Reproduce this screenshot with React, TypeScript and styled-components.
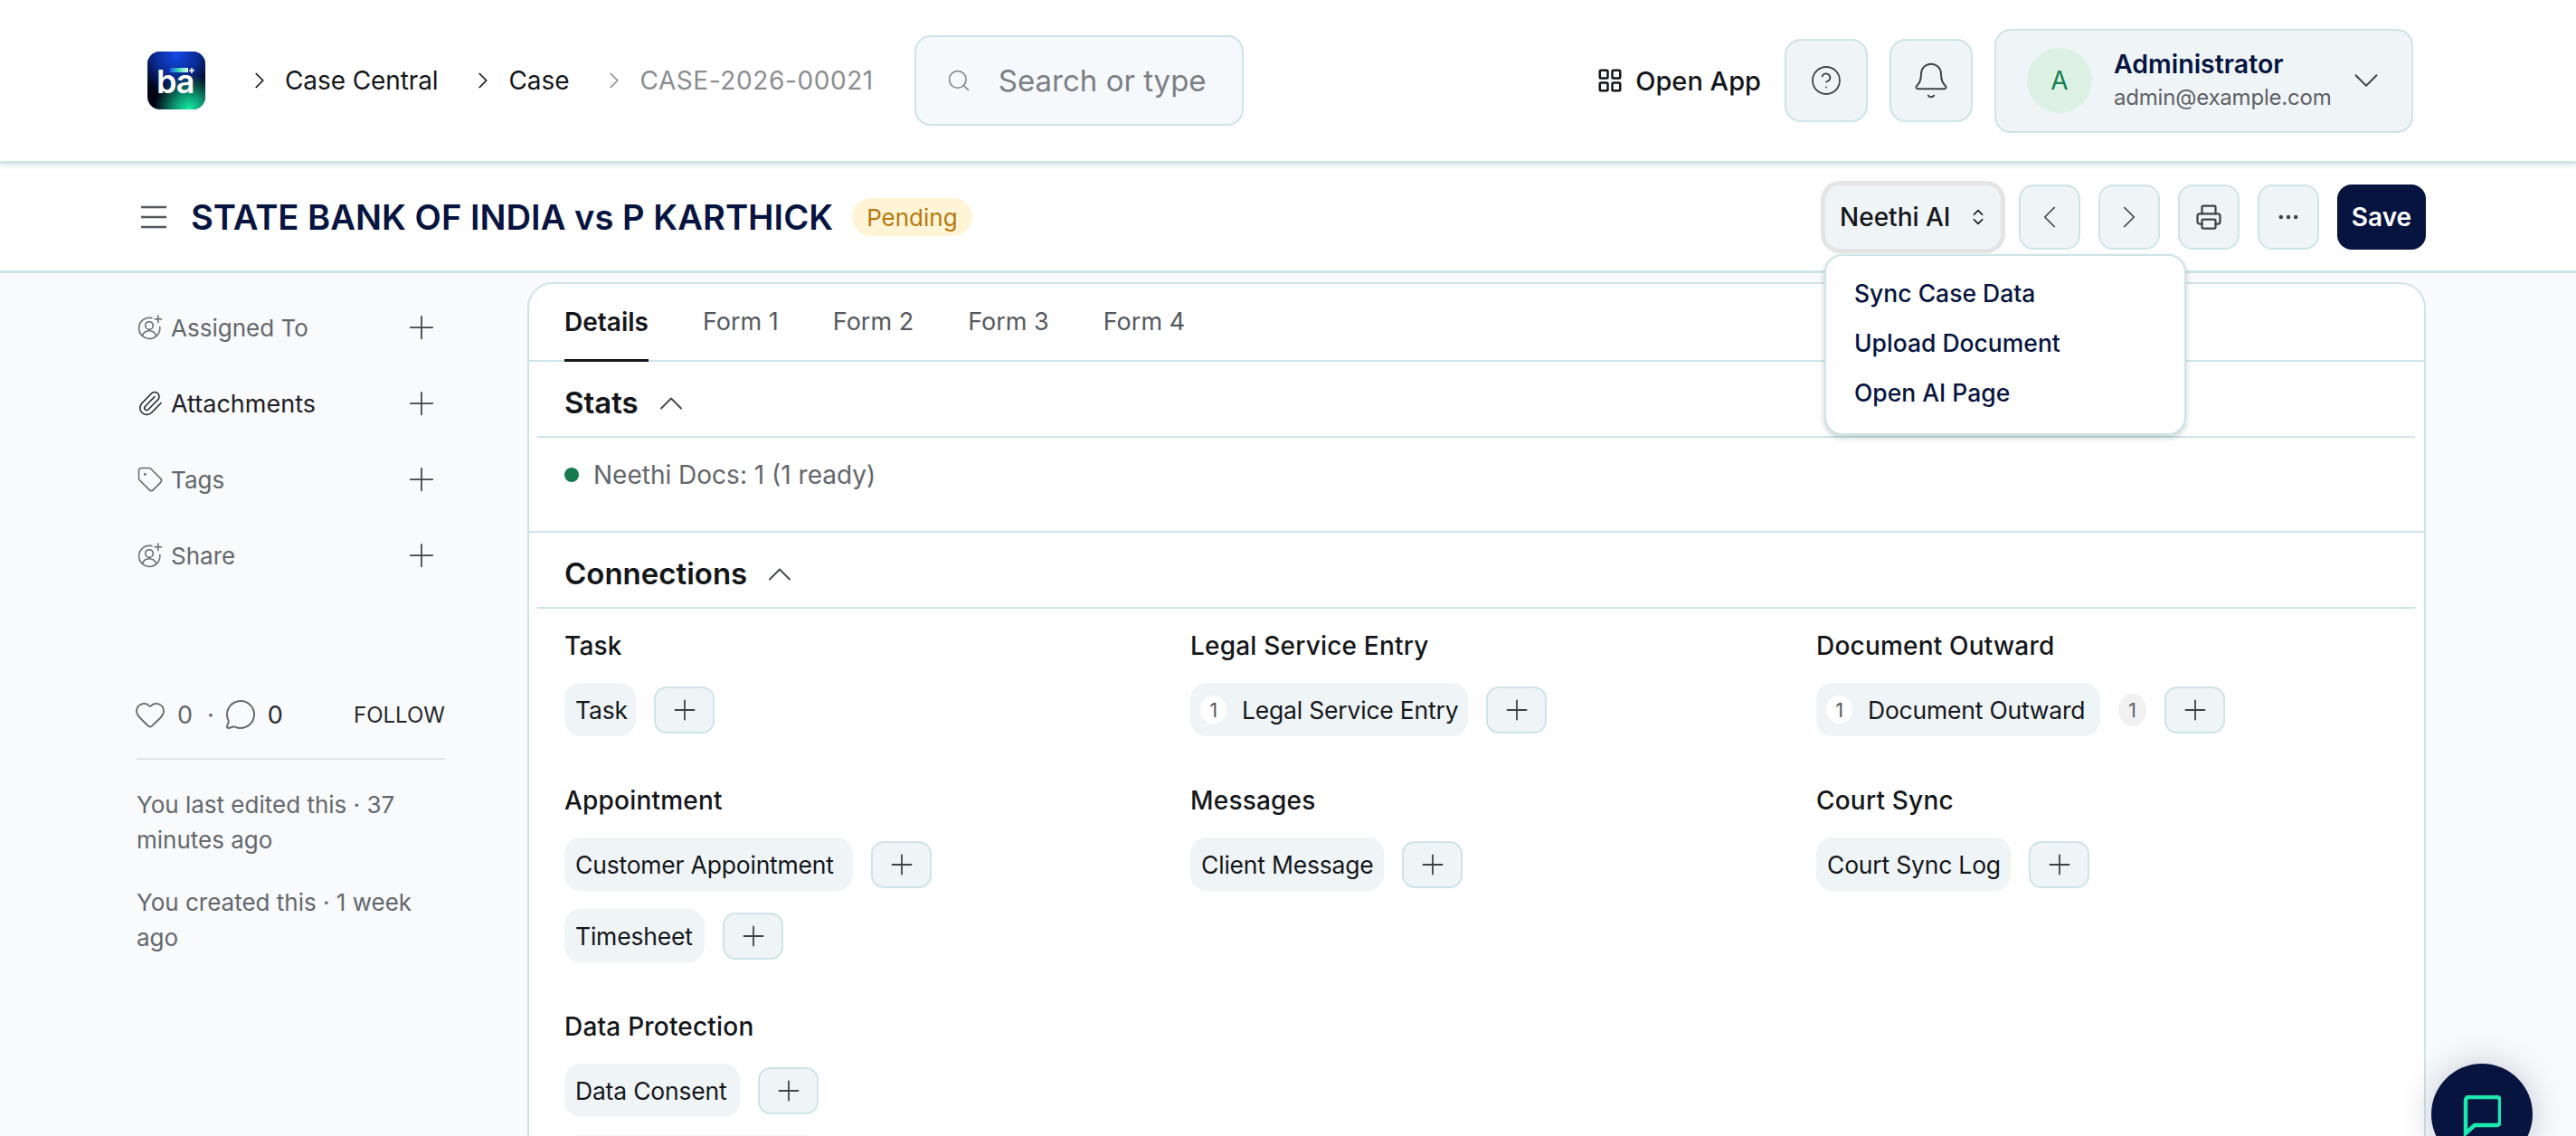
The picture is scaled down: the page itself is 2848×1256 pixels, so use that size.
import React from "react";
import styled, {createGlobalStyle} from "styled-components";
import {
  Bell, ChevronDown, ChevronLeft, ChevronRight, ChevronUp, ChevronsUpDown, CircleHelp, Ellipsis,
  Heart, LayoutGrid, MessageCircle, Paperclip, Plus, Printer, Search, Tag,
} from "lucide-react";

const GlobalStyle = createGlobalStyle`
  html, body {
    margin: 0;
    height: 100%;
    overflow: hidden;
    background: #f8fafc;
    font-family: Inter, "Liberation Sans", sans-serif;
    color: #111827;
  }
  * { box-sizing: border-box; }
`
const line = "#cfe4e7"
const navy = "#06143f"
const soft = "#eff4f7"

const Page = styled.div`
  width: 2848px;
  height: 1256px;
  overflow: hidden;
  display: flex;
  flex-direction: column;
`
const Navbar = styled.header`
  flex: none;
  height: 181px;
  background: #fff;
  border-bottom: 3px solid ${line};
  box-shadow: 0 2px 6px rgba(30, 50, 60, 0.14);
  display: flex;
  align-items: center;
  padding: 0 180px 0 163px;
  position: relative;
  z-index: 2;
`
const Logo = styled.svg`
  width: 64px;
  height: 64px;
  flex: none;
`
const Crumbs = styled.nav`
  display: flex;
  align-items: center;
  gap: 35px;
  margin-left: 45px;
`
const Crumb = styled.span<{ $muted?: boolean }>`
  display: flex;
  align-items: center;
  gap: 13px;
  font-size: 28px;
  letter-spacing: ${props => props.$muted ? "0.6px" : "-0.1px"};
  color: ${props => props.$muted ? "#8a8d91" : "#14161a"};
`
const SearchBox = styled.div`
  width: 364px;
  height: 100px;
  margin-left: 45px;
  background: #f6f9fb;
  border: 2px solid ${line};
  border-radius: 18px;
  display: flex;
  align-items: center;
  gap: 30px;
  padding-left: 33px;
  font-size: 33px;
  color: #7b7f85;
`
const NavRight = styled.div`
  margin-left: auto;
  display: flex;
  align-items: center;
`
const OpenApp = styled.div`
  display: flex;
  align-items: center;
  gap: 13px;
  font-size: 29px;
  font-weight: 500;
  color: #14161a;
  margin-right: 26px;
`
const NavButton = styled.div`
  width: 92px;
  height: 92px;
  margin-right: 24px;
  background: ${soft};
  border: 2px solid ${line};
  border-radius: 18px;
  display: flex;
  align-items: center;
  justify-content: center;
  color: #3f4347;
`
const UserBox = styled.div`
  width: 463px;
  height: 115px;
  background: ${soft};
  border: 2px solid ${line};
  border-radius: 18px;
  display: flex;
  align-items: center;
  padding-left: 34px;
  color: #3f4347;
`
const Avatar = styled.div`
  width: 72px;
  height: 72px;
  border-radius: 50%;
  background: #dcf1e3;
  color: #13804f;
  font-size: 28px;
  display: flex;
  align-items: center;
  justify-content: center;
`
const UserText = styled.div`
  margin-left: 24px;
  width: 256px;
`
const UserName = styled.div`
  font-size: 28.5px;
  font-weight: 600;
  line-height: 38px;
  color: ${navy};
`
const UserMail = styled.div`
  font-size: 24px;
  letter-spacing: -0.2px;
  line-height: 36px;
  color: #5d6166;
`
const TitleBar = styled.div`
  flex: none;
  height: 121px;
  background: #fff;
  border-bottom: 3px solid ${line};
  display: flex;
  align-items: center;
  padding: 0 166px 0 156px;
  color: #55595e;
`
const MenuLines = styled.svg`
  width: 28px;
  height: 26px;
  flex: none;
`
const Title = styled.h1`
  margin: 0 0 0 27px;
  font-size: 38.2px;
  font-weight: 600;
  color: ${navy};
`
const Pill = styled.span`
  margin-left: 21px;
  height: 42px;
  padding: 0 16px;
  border-radius: 21px;
  background: #fff5d6;
  color: #b9770e;
  font-size: 26px;
  display: flex;
  align-items: center;
`
const Actions = styled.div`
  margin-left: auto;
  display: flex;
  align-items: center;
  gap: 20px;
`
const MenuAnchor = styled.div`
  position: relative;
`
const AiButton = styled.div`
  width: 194px;
  height: 70px;
  background: ${soft};
  border-radius: 16px;
  box-shadow: 0 0 0 5px #e4e4e4;
  display: flex;
  align-items: center;
  justify-content: space-between;
  padding: 0 14px 0 16px;
  font-size: 28px;
  font-weight: 500;
  color: #14161a;
`
const Dropdown = styled.div`
  position: absolute;
  top: 76px;
  left: -1px;
  z-index: 5;
  width: 400px;
  height: 200px;
  background: #fff;
  border: 2px solid ${line};
  border-radius: 20px;
  box-shadow: 0 3px 6px rgba(30, 70, 80, 0.25);
  padding: 13px 0 0 31px;
  display: flex;
  flex-direction: column;
`
const DropItem = styled.div`
  height: 55px;
  display: flex;
  align-items: center;
  font-size: 26.5px;
  font-weight: 500;
  color: ${navy};
`
const IconButton = styled.div`
  width: 68px;
  height: 72px;
  background: ${soft};
  border: 2px solid ${line};
  border-radius: 16px;
  display: flex;
  align-items: center;
  justify-content: center;
  color: #3f4347;
`
const SaveButton = styled.div`
  width: 98px;
  height: 72px;
  background: ${navy};
  color: #fff;
  border-radius: 16px;
  font-size: 28px;
  font-weight: 600;
  display: flex;
  align-items: center;
  justify-content: center;
`
const Body = styled.div`
  flex: 1;
  min-height: 0;
  display: flex;
  padding-top: 10px;
  position: relative;
`
const Sidebar = styled.aside`
  width: 583px;
  flex: none;
  padding: 8px 0 0 151px;
`
const SideRow = styled.div<{ $dark?: boolean }>`
  width: 336px;
  height: 84px;
  display: flex;
  align-items: center;
  gap: 8px;
  font-size: ${props => props.$dark ? "27px" : "26px"};
  color: ${props => props.$dark ? "#1d2024" : "#63676c"};

  > svg:last-child {
    margin-left: auto;
    color: #3f4347;
  }
`
const Likes = styled.div`
  width: 344px;
  height: 40px;
  margin: 114px 0 0 -3px;
  display: flex;
  align-items: center;
  font-size: 27px;
  color: #63676c;
`
const LikeCount = styled.span<{ $dark?: boolean }>`
  margin: 0 ${props => props.$dark ? 0 : "16px"} 0 12px;
  color: ${props => props.$dark ? "#25282c" : "#63676c"};
`
const LikeSep = styled.span`
  margin-right: 11px;
`
const Follow = styled.span`
  margin-left: auto;
  font-size: 24px;
  color: #25282c;
`
const Divider = styled.div`
  width: 341px;
  height: 2px;
  margin: 28px 0 30px;
  background: #e1e5e8;
`
const Meta = styled.p`
  width: 341px;
  margin: 0 0 30px;
  font-size: 26px;
  line-height: 39px;
  color: #63676c;
`
const Card = styled.main`
  width: 2099px;
  flex: none;
  background: #fff;
  border: 2px solid ${line};
  border-bottom: 0;
  border-top-left-radius: 28px;
  border-top-right-radius: 28px;
  overflow: hidden;
`
const Tabs = styled.div`
  height: 86px;
  border-bottom: 2px solid ${line};
  display: flex;
  gap: 60px;
  padding-left: 39px;
`
const TabItem = styled.div<{ $active?: boolean }>`
  height: 86px;
  display: flex;
  align-items: center;
  font-size: ${props => props.$active ? "28px" : "27px"};
  font-weight: ${props => props.$active ? 600 : 400};
  color: ${props => props.$active ? "#14161a" : "#55595e"};
  border-bottom: 3px solid ${props => props.$active ? "#14161a" : "transparent"};
`
const SectionHead = styled.div`
  height: 84px;
  margin: 0 10px 0 9px;
  padding: 8px 0 0 30px;
  border-bottom: 2px solid ${line};
  display: flex;
  align-items: center;
  gap: 14px;
  font-size: 33px;
  font-weight: 600;
  color: #14161a;

  > svg {
    color: #3f4347;
    margin-top: 2px;
  }
`
const StatsBody = styled.div`
  height: 105px;
  border-bottom: 2px solid ${line};
  padding: 0 0 21px 39px;
  display: flex;
  align-items: center;
  gap: 16px;
  font-size: 28px;
  color: #63676c;
`
const Dot = styled.span`
  width: 16px;
  height: 16px;
  border-radius: 50%;
  background: #167a4f;
`
const Links = styled.div`
  display: grid;
  grid-template-columns: repeat(3, 692px);
  row-gap: 51px;
  padding: 21px 0 0 39px;
`
const Group = styled.section``
const GroupTitle = styled.h3`
  margin: 0 0 21px;
  height: 40px;
  line-height: 40px;
  font-size: 28px;
  font-weight: 500;
  letter-spacing: 0.2px;
  color: #14161a;
`
const LinkRow = styled.div`
  display: flex;
  align-items: center;
  height: 59px;
  margin-bottom: 20px;

  &:last-child {
    margin-bottom: 0;
  }
`
const Chip = styled.div<{ $width: number }>`
  width: ${props => props.$width}px;
  height: 59px;
  padding: 0 0 0 12px;
  background: ${soft};
  border-radius: 18px;
  display: flex;
  align-items: center;
  font-size: 26.5px;
  letter-spacing: -0.2px;
  white-space: nowrap;
  color: #14161a;
`
const ChipCount = styled.span`
  width: 29px;
  height: 31px;
  margin: 0 17px 0 -1px;
  border-radius: 50%;
  background: #fff;
  color: #55595e;
  font-size: 22px;
  display: flex;
  align-items: center;
  justify-content: center;
`
const OuterCount = styled.span`
  width: 31px;
  height: 36px;
  margin-left: 20px;
  border-radius: 50%;
  background: #f1f1f1;
  color: #63676c;
  font-size: 22px;
  display: flex;
  align-items: center;
  justify-content: center;
`
const AddButton = styled.div`
  width: 67px;
  height: 52px;
  margin-left: 20px;
  background: ${soft};
  border: 2px solid ${line};
  border-radius: 14px;
  display: flex;
  align-items: center;
  justify-content: center;
  color: #3f4347;
`
const ChatFab = styled.div`
  position: fixed;
  left: 2688px;
  top: 1176px;
  z-index: 6;
  width: 112px;
  height: 112px;
  border-radius: 50%;
  background: ${navy};
  box-shadow: 0 0 36px rgba(20, 30, 60, 0.22);
  display: flex;
  align-items: flex-start;
  justify-content: center;
  padding-top: 35px;
`

type LinkItem = { name: string, width: number, count?: number, outer?: number, noAdd?: boolean }
type LinkGroup = { title: string, items: LinkItem[] }

const groups: LinkGroup[] = [
  {title: "Task", items: [{name: "Task", width: 79}]},
  {title: "Legal Service Entry", items: [{name: "Legal Service Entry", width: 307, count: 1}]},
  {title: "Document Outward", items: [{name: "Document Outward", width: 314, count: 1, outer: 1}]},
  {title: "Appointment", items: [{name: "Customer Appointment", width: 319}, {name: "Timesheet", width: 155}]},
  {title: "Messages", items: [{name: "Client Message", width: 214}]},
  {title: "Court Sync", items: [{name: "Court Sync Log", width: 215}]},
  // second chip only shows its top edge at the bottom of the window
  {title: "Data Protection", items: [{name: "Data Consent", width: 194}, {name: "", width: 281, noAdd: true}]},
]

const UserPlus = () => (
  <svg width="30" height="30" viewBox="0 0 24 24" fill="none" stroke="currentColor" strokeWidth="1.2" strokeLinecap="round">
    <path d="M13.5 3.6A9.3 9.3 0 1 0 20.6 11.5"/>
    <circle cx="11.2" cy="10.3" r="3.4"/>
    <path d="M5 19.5c1-3 3.4-4.6 6.2-4.6s5.2 1.6 6.2 4.6"/>
    <path d="M19 1.5v6M16 4.5h6"/>
  </svg>
)

const BaLogo = () => (
  <Logo viewBox="0 0 64 64">
    <defs>
      <radialGradient id="logoBlue" cx="0.5" cy="0.05" r="0.7">
        <stop offset="0" stopColor="#1548e8"/>
        <stop offset="0.55" stopColor="#0a2a90"/>
        <stop offset="1" stopColor="#0a2a90" stopOpacity="0"/>
      </radialGradient>
      <radialGradient id="logoGreen" cx="0.72" cy="1" r="0.6">
        <stop offset="0" stopColor="#14f0a4"/>
        <stop offset="0.45" stopColor="#0c8f6c"/>
        <stop offset="1" stopColor="#0c8f6c" stopOpacity="0"/>
      </radialGradient>
      <linearGradient id="logoBar" x1="0" x2="1">
        <stop offset="0" stopColor="#1d5bf0"/>
        <stop offset="0.5" stopColor="#3fe0b0"/>
        <stop offset="1" stopColor="#e8fff6"/>
      </linearGradient>
    </defs>
    <rect width="64" height="64" rx="14" fill="#020414"/>
    <rect width="64" height="64" rx="14" fill="url(#logoBlue)"/>
    <rect width="64" height="64" rx="14" fill="url(#logoGreen)"/>
    <rect x="25" y="18" width="20" height="5" fill="url(#logoBar)"/>
    <path d="M49 18v6M46 21h6" stroke="#fff" strokeWidth="1.6"/>
    <text x="10" y="46" fontFamily="Inter, sans-serif" fontWeight="600" fontSize="36" letterSpacing="-1" fill="#fff">ba</text>
  </Logo>
)

const ChatIcon = () => (
  <svg width="42" height="46" viewBox="0 0 42 46" fill="none" stroke="#1ce8ad" strokeWidth="4.5">
    <path d="M3 5.5a3.5 3.5 0 0 1 3.5-3.5h31a3.5 3.5 0 0 1 3.5 3.5v24a3.5 3.5 0 0 1-3.5 3.5H13L3 42z"/>
  </svg>
)

const sideItems = [
  {label: "Assigned To", icon: <UserPlus/>},
  {label: "Attachments", icon: <Paperclip size={30} strokeWidth={1.2}/>, dark: true},
  {label: "Tags", icon: <Tag size={30} strokeWidth={1.2}/>},
  {label: "Share", icon: <UserPlus/>},
]

const App: React.FC = () => {
  return (
    <Page>
      <GlobalStyle/>
      <Navbar>
        <BaLogo/>
        <Crumbs>
          <Crumb><ChevronRight size={30} strokeWidth={1.4}/>Case Central</Crumb>
          <Crumb><ChevronRight size={30} strokeWidth={1.4}/>Case</Crumb>
          <Crumb $muted><ChevronRight size={30} strokeWidth={1.4}/>CASE-2026-00021</Crumb>
        </Crumbs>
        <SearchBox><Search size={28} strokeWidth={1.3}/>Search or type</SearchBox>
        <NavRight>
          <OpenApp><LayoutGrid size={30} strokeWidth={2}/>Open App</OpenApp>
          <NavButton><CircleHelp size={36} strokeWidth={1.2}/></NavButton>
          <NavButton><Bell size={44} strokeWidth={1.1}/></NavButton>
          <UserBox>
            <Avatar>A</Avatar>
            <UserText>
              <UserName>Administrator</UserName>
              <UserMail>admin@example.com</UserMail>
            </UserText>
            <ChevronDown size={46} strokeWidth={1}/>
          </UserBox>
        </NavRight>
      </Navbar>
      <TitleBar>
        <MenuLines viewBox="0 0 28 26" fill="none" stroke="currentColor" strokeWidth="2.4">
          <path d="M0 2h28M0 13h28M0 24h28"/>
        </MenuLines>
        <Title>STATE BANK OF INDIA vs P KARTHICK</Title>
        <Pill>Pending</Pill>
        <Actions>
          <MenuAnchor>
            <AiButton>Neethi AI<ChevronsUpDown size={22} strokeWidth={1.8}/></AiButton>
            <Dropdown>
              <DropItem>Sync Case Data</DropItem>
              <DropItem>Upload Document</DropItem>
              <DropItem>Open AI Page</DropItem>
            </Dropdown>
          </MenuAnchor>
          <IconButton><ChevronLeft size={42} strokeWidth={1}/></IconButton>
          <IconButton><ChevronRight size={42} strokeWidth={1}/></IconButton>
          <IconButton><Printer size={30} strokeWidth={1.8}/></IconButton>
          <IconButton><Ellipsis size={28} strokeWidth={1.8}/></IconButton>
          <SaveButton>Save</SaveButton>
        </Actions>
      </TitleBar>
      <Body>
        <Sidebar>
          {sideItems.map(item => (
            <SideRow key={item.label} $dark={item.dark}>
              {item.icon}
              {item.label}
              <Plus size={42} strokeWidth={1}/>
            </SideRow>
          ))}
          <Likes>
            <Heart size={36} strokeWidth={1.2}/>
            <LikeCount>0</LikeCount>
            <LikeSep>·</LikeSep>
            <MessageCircle size={36} strokeWidth={1.3}/>
            <LikeCount $dark>0</LikeCount>
            <Follow>FOLLOW</Follow>
          </Likes>
          <Divider/>
          <Meta>You last edited this · 37 minutes ago</Meta>
          <Meta>You created this · 1 week ago</Meta>
        </Sidebar>
        <Card>
          <Tabs>
            <TabItem $active>Details</TabItem>
            <TabItem>Form 1</TabItem>
            <TabItem>Form 2</TabItem>
            <TabItem>Form 3</TabItem>
            <TabItem>Form 4</TabItem>
          </Tabs>
          <SectionHead>Stats<ChevronUp size={44} strokeWidth={1}/></SectionHead>
          <StatsBody><Dot/>Neethi Docs: 1 (1 ready)</StatsBody>
          <SectionHead>Connections<ChevronUp size={44} strokeWidth={1}/></SectionHead>
          <Links>
            {groups.map(group => (
              <Group key={group.title}>
                <GroupTitle>{group.title}</GroupTitle>
                {group.items.map(item => (
                  <LinkRow key={item.name}>
                    <Chip $width={item.width}>
                      {item.count ? <ChipCount>{item.count}</ChipCount> : null}
                      {item.name}
                    </Chip>
                    {item.outer ? <OuterCount>{item.outer}</OuterCount> : null}
                    {item.noAdd ? null : <AddButton><Plus size={36} strokeWidth={1.2}/></AddButton>}
                  </LinkRow>
                ))}
              </Group>
            ))}
          </Links>
        </Card>
        <ChatFab><ChatIcon/></ChatFab>
      </Body>
    </Page>
  )
}
export default App
